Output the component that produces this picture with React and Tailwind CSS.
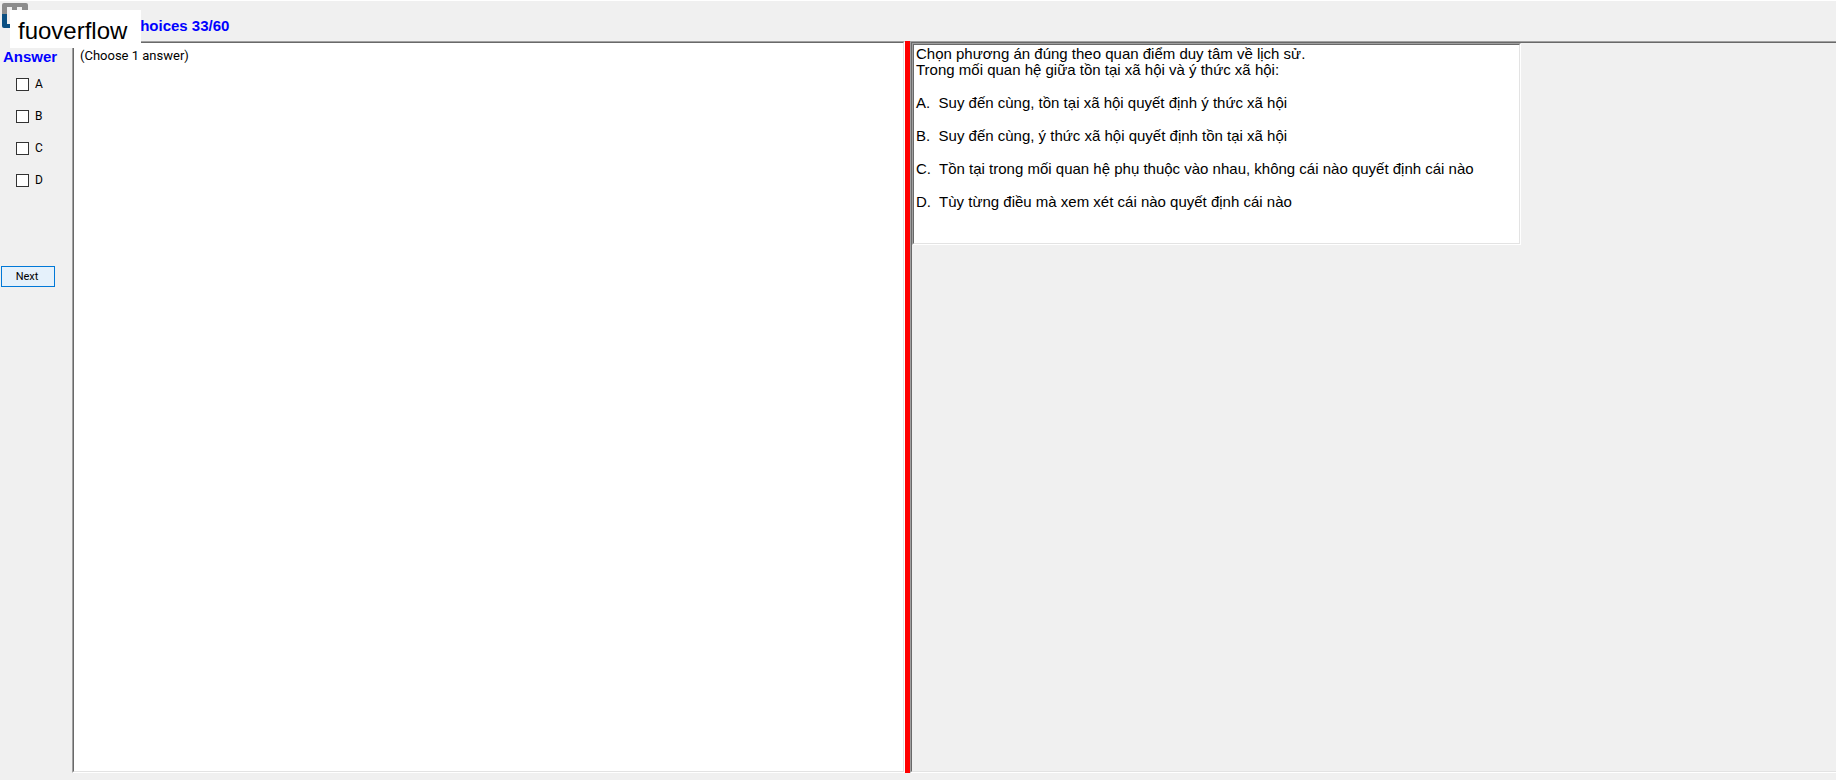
import React from "react";

const answers = ["A", "B", "C", "D"];

const options = [
  { key: "A", text: "Suy đến cùng, tồn tại xã hội quyết định ý thức xã hội" },
  { key: "B", text: "Suy đến cùng, ý thức xã hội quyết định tồn tại xã hội" },
  { key: "C", text: "Tồn tại trong mối quan hệ phụ thuộc vào nhau, không cái nào quyết định cái nào" },
  { key: "D", text: "Tùy từng điều mà xem xét cái nào quyết định cái nào" },
];

// Two-step sunken border, like a classic desktop panel
function Sunken({ className = "", innerClassName = "", children }) {
  return (
    <div className={"flex border border-t-[#a0a0a0] border-l-[#a0a0a0] border-r-white border-b-white " + className}>
      <div className={"flex-1 min-w-0 border border-t-[#696969] border-l-[#696969] border-r-[#e3e3e3] border-b-[#e3e3e3] " + innerClassName}>
        {children}
      </div>
    </div>
  );
}

function Logo() {
  return (
    <svg className="absolute left-[2px] top-[2px]" width="26" height="26" viewBox="0 0 26 26" aria-hidden="true">
      <path d="M0 2a2 2 0 0 1 2-2h22a2 2 0 0 1 2 2v9H0z" fill="#8c8c8c" />
      <path d="M0 11h26v12a2 2 0 0 1-2 2H2a2 2 0 0 1-2-2z" fill="#0b4f82" />
      <path d="M5 4h5v17H5zM15 4h5v17h-5z" fill="#f0f0f0" />
    </svg>
  );
}

function Header() {
  return (
    <header className="relative h-[41px] border-t border-white">
      <Logo />
      <h1 className="pt-[15px] pl-[71px] text-[15px] leading-5 font-bold text-[#0000ff]">
        Multiple choices 33/60
      </h1>
      <div className="absolute left-[10px] top-[9px] z-10 flex h-[38px] w-[131px] items-center bg-white pt-1 pl-2 text-2xl">
        fuoverflow
      </div>
    </header>
  );
}

function Sidebar() {
  return (
    <aside className="w-[72px] shrink-0">
      <h2 className="pt-[6px] pl-[3px] text-[15px] leading-5 font-bold text-[#0000ff]">Answer</h2>
      <div className="flex flex-col gap-4 pt-[9px] pl-4 font-['Roboto',sans-serif]">
        {answers.map(a => (
          <label key={a} className="flex h-4 items-center gap-[6px] text-xs">
            <input type="checkbox"
              className="h-[13px] w-[13px] appearance-none border border-[#333333] bg-white checked:bg-[#333333]" />
            {a}
          </label>
        ))}
      </div>
      <button className="mt-[78px] ml-px flex h-[21px] w-[54px] items-center justify-center border border-[#0078d7] bg-[#e5f1fb] pt-[2px] pr-[2px] font-['Roboto',sans-serif] text-[11px]">
        Next
      </button>
    </aside>
  );
}

export default function App() {
  return (
    <div className="flex h-screen flex-col bg-[#f0f0f0] pb-[7px] font-['Liberation_Sans',Arial,sans-serif] text-black">
      <Header />
      <main className="flex min-h-0 flex-1">
        <Sidebar />
        <Sunken className="flex-[831]" innerClassName="bg-white">
          <p className="pt-[3px] pl-[6px] font-['Roboto',sans-serif] text-[13px] leading-5">(Choose 1 answer)</p>
        </Sunken>
        <div className="w-[5px] shrink-0 bg-[#ff0000]" />
        <Sunken className="flex-[925] border-r-0" innerClassName="border-r-0">
          <Sunken className="h-[202px] w-[609px]" innerClassName="bg-white">
            <div className="pt-px pl-[2px] text-[15px] leading-4">
              <p>Chọn phương án đúng theo quan điểm duy tâm về lịch sử.</p>
              <p>Trong mối quan hệ giữa tồn tại xã hội và ý thức xã hội:</p>
              {options.map(o => (
                <p key={o.key} className="mt-[17px] whitespace-pre">
                  {o.key}.{"  "}{o.text}
                </p>
              ))}
            </div>
          </Sunken>
        </Sunken>
      </main>
    </div>
  );
}
